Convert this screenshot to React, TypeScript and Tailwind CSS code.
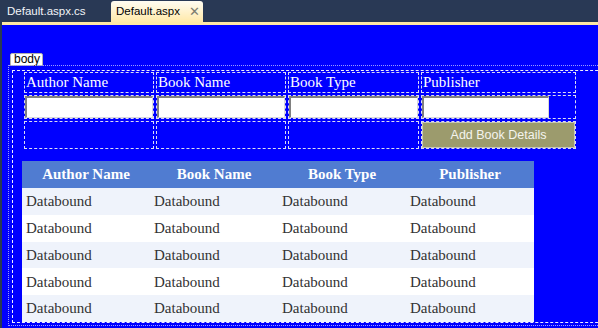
import React from 'react';

const formHeaders = ['Author Name', 'Book Name', 'Book Type', 'Publisher'];
const cellWidths = ['w-[130px]', 'w-[130px]', 'w-[131px]', 'w-[155px]'];
const gridHeaders = ['Author Name', 'Book Name', 'Book Type', 'Publisher'];
const rows = [0, 1, 2, 3, 4];

const serif = { fontFamily: '"Liberation Serif", "Times New Roman", serif' };

export default function App() {
  return (
    <div className="w-[598px] h-[328px] overflow-hidden bg-[#293955] flex flex-col">
      {/* Tab strip */}
      <div
        className="h-[22px] flex items-end text-[11.5px]"
        style={{ fontFamily: '"Liberation Sans", Arial, sans-serif' }}
      >
        <div className="w-[111px] h-[20px] flex items-center pl-[7px] text-[#f2f4f8]">Default.aspx.cs</div>
        <div className="w-[92px] h-[21px] flex items-center pl-[5px] rounded-t-[3px] bg-gradient-to-b from-[#fffcf2] to-[#ffe9a8] text-black">
          <span>Default.aspx</span>
          <span className="ml-[9px] text-[#7d7d70] text-[13px] leading-none">✕</span>
        </div>
      </div>
      <div className="ml-[2px] h-[3px] bg-[#ffe8a6]" />

      {/* Design surface */}
      <div className="ml-[2px] flex-1 bg-[#0000ff] pt-[28px] flex flex-col min-h-0">
        <div
          className="ml-[8px] w-[33px] h-[13px] bg-white border border-[#b0b0b0] text-black text-[12px] leading-[11px] pl-[3px] rounded-t-[2px]"
          style={{ fontFamily: '"Liberation Sans", Arial, sans-serif' }}
        >
          body
        </div>
        <div className="-mt-[1px] ml-[6px] w-[620px] border-t border-l border-b border-dotted border-[#9c9cff] pt-[4px] pl-[3px] pb-[2px]">
          <div className="border-t border-l border-b border-dashed border-[#f0f0ff] pt-[1px] h-[253px] flex flex-col">
            {/* Form table */}
            <div className="ml-[11px] flex flex-col gap-[2px]" style={serif}>
              <div className="flex gap-[2px] h-[21px]">
                {formHeaders.map((h, i) => (
                  <div
                    key={h}
                    className={`${cellWidths[i]} border border-dashed border-[#dcdcf4] text-white text-[15px] leading-[19px] pl-[1px]`}
                  >
                    {h}
                  </div>
                ))}
              </div>
              <div className="flex gap-[2px] h-[24px]">
                {formHeaders.map((h, i) => (
                  <div key={h} className={`${cellWidths[i]} border border-dashed border-[#dcdcf4] flex`}>
                    <div
                      className={`${i === 3 ? 'w-[127px]' : 'w-full'} h-[22px] bg-white border-t-2 border-l-2 border-[#808080] border-r border-b border-r-[#d8d8d8] border-b-[#d8d8d8]`}
                    />
                  </div>
                ))}
              </div>
              <div className="flex gap-[2px] h-[28px]">
                {formHeaders.map((h, i) => (
                  <div key={h} className={`${cellWidths[i]} border border-dashed border-[#dcdcf4] flex`}>
                    {i === 3 && (
                      <div
                        className="w-full h-full bg-[#9c9b6d] border border-[#c8c8b8] flex items-center justify-center text-[#f4f4ee] text-[12.5px]"
                        style={{ fontFamily: '"Liberation Sans", Arial, sans-serif' }}
                      >
                        Add Book Details
                      </div>
                    )}
                  </div>
                ))}
              </div>
            </div>

            {/* GridView */}
            <div className="ml-[9px] mt-[12px] w-[512px] text-[15px]" style={serif}>
              <div className="grid grid-cols-4 h-[27px] bg-[#507cd1] text-white font-bold items-center">
                {gridHeaders.map((h) => (
                  <div key={h} className="text-center">
                    {h}
                  </div>
                ))}
              </div>
              {rows.map((r) => (
                <div
                  key={r}
                  className={`grid grid-cols-4 h-[26.8px] items-center text-[#333333] ${r % 2 === 0 ? 'bg-[#eff3fb]' : 'bg-white'}`}
                >
                  {gridHeaders.map((h) => (
                    <div key={h} className="pl-[4px]">
                      Databound
                    </div>
                  ))}
                </div>
              ))}
            </div>
          </div>
        </div>
      </div>
    </div>
  );
}
